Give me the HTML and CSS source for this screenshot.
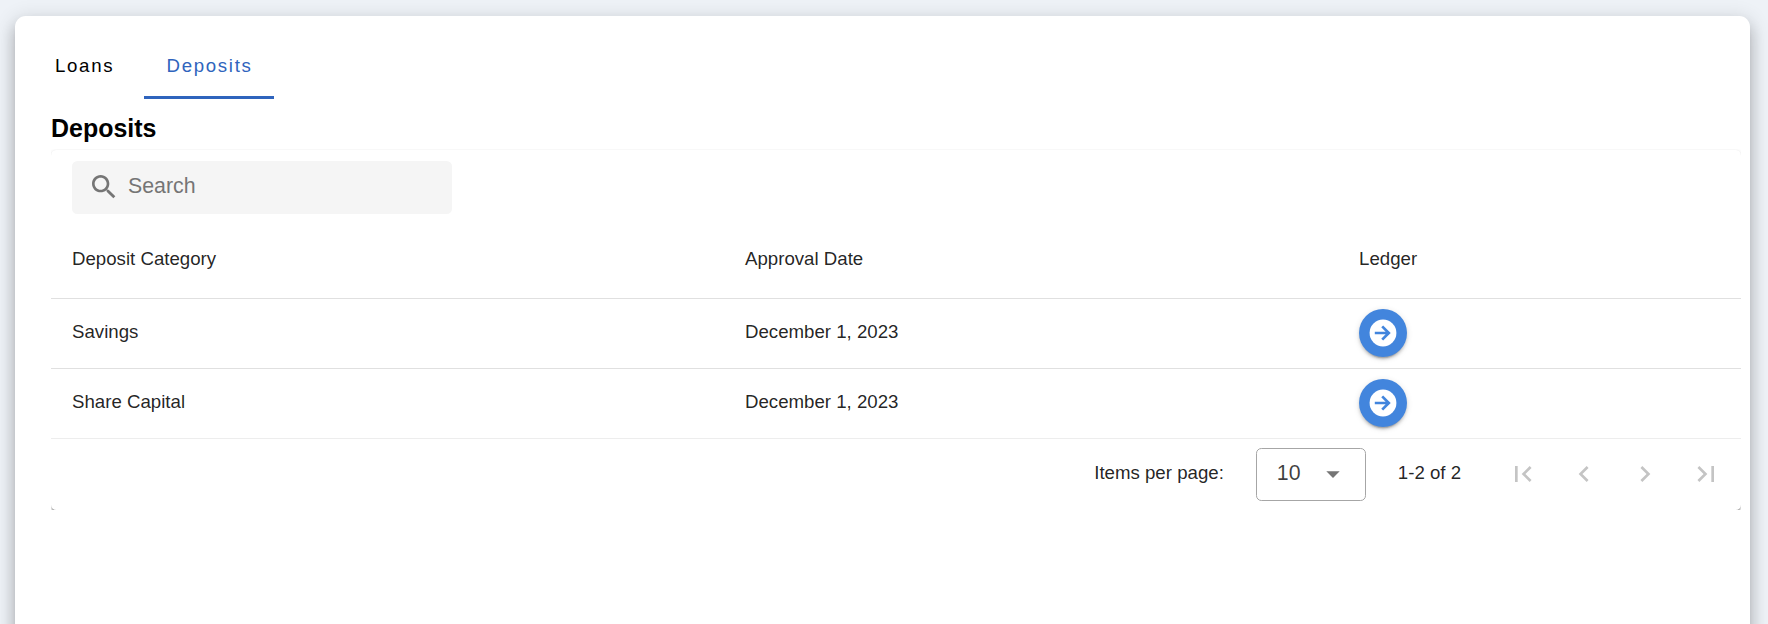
FILE: index.html
```html
<!DOCTYPE html>
<html lang="en">
<head>
<meta charset="utf-8">
<title>Deposits</title>
<link rel="stylesheet" href="styles.css">
</head>
<body>
<div class="page">
<main class="card">
  <nav class="tabs">
    <a class="tab tab-first">Loans</a>
    <a class="tab active">Deposits</a>
  </nav>
  <h3 class="title">Deposits</h3>
  <div class="clip">
    <section class="paper">
      <div class="search">
        <svg class="icon" viewBox="0 0 24 24"><path d="M15.5 14h-.79l-.28-.27C15.41 12.59 16 11.11 16 9.5 16 5.91 13.09 3 9.5 3S3 5.91 3 9.5 5.91 16 9.5 16c1.61 0 3.09-.59 4.23-1.57l.27.28v.79l5 4.99L20.49 19l-4.99-5zm-6 0C7.01 14 5 11.99 5 9.5S7.01 5 9.5 5 14 7.01 14 9.5 11.99 14 9.5 14z"/></svg>
        <span>Search</span>
      </div>
      <div class="row head"><span>Deposit Category</span><span>Approval Date</span><span>Ledger</span></div>
      <div class="row">
        <span>Savings</span><span>December 1, 2023</span>
        <button class="go" aria-label="Open ledger"><svg class="icon" viewBox="0 0 32 32"><circle class="disc" cx="16" cy="16" r="13.4"/><path class="arrow" d="M7.8 16H22M15.2 9.4L21.8 16L15.2 22.6"/></svg></button>
      </div>
      <div class="row last">
        <span>Share Capital</span><span>December 1, 2023</span>
        <button class="go" aria-label="Open ledger"><svg class="icon" viewBox="0 0 32 32"><circle class="disc" cx="16" cy="16" r="13.4"/><path class="arrow" d="M7.8 16H22M15.2 9.4L21.8 16L15.2 22.6"/></svg></button>
      </div>
      <div class="footer">
        <span class="label">Items per page:</span>
        <div class="select"><span>10</span><svg class="icon" viewBox="0 0 24 24"><path d="M7 10l5 5 5-5z"/></svg></div>
        <span class="range">1-2 of 2</span>
        <div class="pager">
          <svg class="icon" viewBox="0 0 24 24"><path d="M18.41 16.59L13.82 12l4.59-4.59L17 6l-6 6 6 6zM6 6h2v12H6z"/></svg>
          <svg class="icon" viewBox="0 0 24 24"><path d="M15.41 7.41L14 6l-6 6 6 6 1.41-1.41L10.83 12z"/></svg>
          <svg class="icon" viewBox="0 0 24 24"><path d="M10 6L8.59 7.41 13.17 12l-4.58 4.59L10 18l6-6z"/></svg>
          <svg class="icon" viewBox="0 0 24 24"><path d="M5.59 7.41L10.18 12l-4.59 4.59L7 18l6-6-6-6zM16 6h2v12h-2z"/></svg>
        </div>
      </div>
    </section>
  </div>
</main>
</div>
</body>
</html>
```
FILE: styles.css
```css
* { box-sizing: border-box; }
body { margin: 0; }
.page {
  height: 624px;
  overflow: hidden;
  padding: 16px 18px 0 15px;
  background: #eef2f7;
  font-family: "Liberation Sans", Arial, sans-serif;
  font-size: 18.67px;
  color: rgba(0, 0, 0, .87);
}
.card {
  height: 640px;
  padding: 24px 9px 0 36px;
  background: #fff;
  border-radius: 10.67px;
  box-shadow: 0 6.67px 6.67px -4px rgba(0,0,0,.2), 0 10.67px 13.33px 1.33px rgba(0,0,0,.14), 0 4px 18.67px 2.67px rgba(0,0,0,.12);
}
.icon { display: block; width: 32px; height: 32px; fill: currentColor; flex: none; }
.tabs { display: flex; height: 59px; }
.tab {
  width: 130px;
  padding-left: 22.6px;
  border-bottom: 3px solid transparent;
  line-height: 51px;
  letter-spacing: 1.67px;
  color: #000;
}
.tab-first { width: 93px; padding-left: 4px; }
.active { color: #2f64bd; border-color: #2f64bd; }
.title { margin: 0; height: 50px; padding-top: 14px; font-size: 24.96px; line-height: 30px; color: #000; }
.clip { height: 361px; padding-top: 1px; overflow: hidden; }
.paper {
  height: 360px;
  padding-top: 11px;
  background: #fff;
  border-radius: 5.33px;
  box-shadow: 0 2.67px 1.33px -1.33px rgba(0,0,0,.2), 0 1.33px 1.33px rgba(0,0,0,.14), 0 1.33px 4px rgba(0,0,0,.12);
}
.search {
  display: flex;
  align-items: center;
  gap: 8px;
  width: 380px;
  height: 53px;
  margin-left: 21px;
  padding: 0 0 1px 16px;
  background: #f5f5f5;
  border-radius: 5.33px;
  font-size: 21.33px;
  color: #757575;
}
.search span { line-height: 24px; padding-bottom: 2px; }
.row {
  display: grid;
  grid-template-columns: 673px 614px 1fr;
  align-items: center;
  height: 70px;
  padding: 0 0 1px 21px;
  border-bottom: 1px solid #e0e0e0;
}
.row > span { padding-bottom: 2px; }
.head { height: 85px; padding-top: 9px; }
.last { border-color: #ededed; }
.go {
  display: grid;
  place-items: center;
  width: 48px;
  height: 48px;
  padding: 0;
  border: 0;
  border-radius: 50%;
  background: #4285dd;
  color: #fff;
  box-shadow: 0 4px 1.33px -2.67px rgba(0,0,0,.2), 0 2.67px 2.67px rgba(0,0,0,.14), 0 1.33px 6.67px rgba(0,0,0,.12);
}
.arrow { fill: none; stroke: #4285dd; stroke-width: 2.7; }
.footer { display: flex; justify-content: flex-end; align-items: center; height: 71px; padding: 0 19.5px 1px 0; }
.select {
  display: flex;
  align-items: center;
  justify-content: space-between;
  width: 110px;
  height: 53px;
  margin: 0 32px;
  padding: 0 16px 0 20px;
  border: 1px solid #a6a6a6;
  border-radius: 5.33px;
  font-size: 21.33px;
  color: rgba(0,0,0,.75);
}
.select .icon { color: #757575; }
.select span { padding-bottom: 1px; }
.label, .range { padding-bottom: 2px; }
.pager { display: flex; gap: 28.8px; margin-left: 46px; color: #c4c4c4; }
```
